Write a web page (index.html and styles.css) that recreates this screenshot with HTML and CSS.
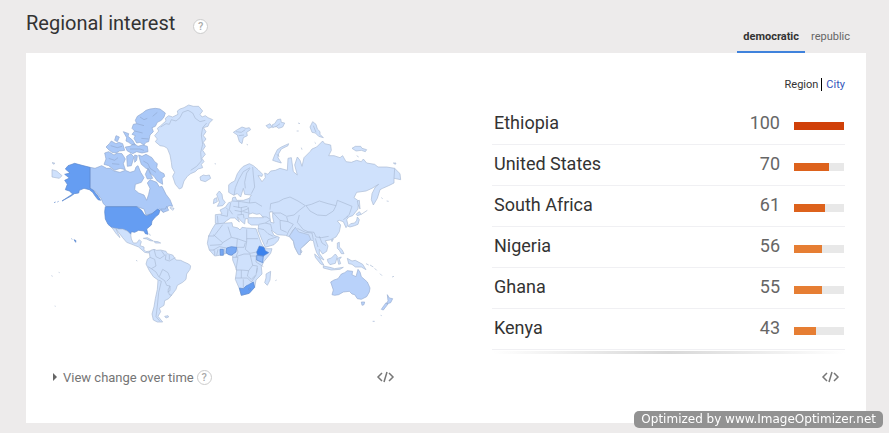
FILE: index.html
```html
<!DOCTYPE html>
<html lang="en">
<head>
<meta charset="utf-8">
<title>Regional interest</title>
<link rel="stylesheet" href="styles.css">
</head>
<body>
<header class="header">
  <h1 class="title">Regional interest</h1>
  <button class="help" type="button" aria-label="Help">?</button>
  <nav class="tabs">
    <button class="tab tab-active" type="button">democratic</button>
    <button class="tab" type="button">republic</button>
  </nav>
</header>
<main class="panel">
  <div class="scope"><span class="scope-current">Region</span><a class="scope-link" href="#city">City</a></div>
  <div class="columns">
    <section class="map-column">
      <svg class="map" viewBox="30 27 1059 672" role="img" aria-label="World map of interest by country">
        <!-- Greenland, Iceland, far eastern Russia -->
        <g class="land">
          <path d="M344 122L356 108 352 100 362 92 378 78 376 70 386 62 398 66 414 58 412 48 420 42 432 38 446 30 460 34 476 34 488 48 480 58 486 66 496 62 504 68 518 74 508 84 504 94 490 98 498 110 490 122 498 132 490 142 496 154 488 166 496 178 486 190 492 200 484 208 488 218 474 222 466 230 452 236 442 244 432 258 426 278 418 282 406 268 398 244 404 232 396 218 394 202 390 180 382 160 372 154 360 152 346 140 352 132Z"/>
          <path class="line" d="M362 96l16-10 10 2 6-14 14 4 12-10 8-16 16-6 14 8 8 16 14 10 16-4M500 84l-12 14-4 22 4 28-6 24 2 26-14 16-18 12"/>
          <path d="M480 246l10-6 8 2 10-2 4 10-16 10-14-4zM36 224l14 4 16 14-8 8-22-4zM36 203l8 1-2 4z"/>
        </g>
        <!-- Canada -->
        <g class="land canada">
          <path d="M150 217L165 220 185 212 200 220 212 220 222 228 240 232 256 226 270 232 284 228 288 216 294 212 302 232 312 248 304 262 286 268 284 284 296 294 312 300 320 316 326 298 330 280 322 264 330 254 350 262 358 276 366 274 378 298 390 314 398 334 386 332 378 344 370 352 358 342 346 350 336 356 318 360 312 342 290 335 200 335 190 326 184 312 168 290 150 280Z"/>
          <path d="M194 174L206 170 222 180 232 174 246 176 256 192 250 206 256 224 240 220 224 226 206 212 192 208 198 192ZM296 180L306 184 318 178 336 188 344 200 352 206 350 218 360 230 372 236 374 244 366 250 368 268 352 258 342 244 332 236 326 222 318 220 304 208 300 196ZM316 238l8-18 8 18 6 12-16 2zM260 184l12-8 10 10-8 26-12 2zM284 180l8 2-2 14-6 6zM198 156l10-10 6-8 14 8 8-4 12 4 6 20-16 2-10 6-12-2-8-6zM228 122l10 4-6 14-8-4zM250 110l16 6-2 8 14 12 8 14-12-2-8-6-8-4 2-10zM256 156L270 154 282 146 294 154 308 150 322 154 324 170 306 174 290 170 278 176 262 168Z"/>
          <path d="M276 100L280 88 290 86 286 76 292 64 308 54 318 46 330 42 346 40 360 42 376 54 372 66 364 76 352 82 346 94 336 98 340 110 330 120 326 140 318 142 312 150 300 142 290 144 282 130 286 122 276 118 284 108Z"/>
          <path class="line" d="M300 66l12 8 10-4M290 86l22 6M284 108l24 6M304 130l22 2M352 52l-14 12M206 190l18 6 10-8M216 206l22 2M310 198l14 8 6 14 18 12M212 152l20 6 14-4M270 162l30 0 12 4M390 338l12 2-4 6z"/>
          <path d="M362 342l14 0 4-8 6 12-16 6z"/>
        </g>
        <!-- United States -->
        <g class="land usa">
          <path d="M76 222L84 212 104 205 126 211 150 217 150 280 160 286 172 300 182 316 174 314 166 304 158 292 148 284 132 280 118 286 116 294 103 296 92 304 66 318 84 306 98 297 88 288 76 284 82 268 74 256 88 249 74 238 90 234Z"/>
          <path d="M196 335L290 335 304 345 314 360 320 362 336 356 352 343 360 346 356 358 346 366 336 378 334 390 320 402 324 418 316 416 312 408 296 406 284 412 274 410 272 418 262 408 248 402 236 402 216 398 204 388 196 372 194 350Z"/>
          <path d="M102 434l6 3-1 5zM94 431l3 2M42 323l5-2M52 321l4-2"/>
        </g>
        <!-- Latin America -->
        <g class="land">
          <path d="M216 398L236 402 248 402 262 408 272 418 274 432 280 444 290 444 298 434 304 440 300 452 312 456 312 464 318 470 330 468 326 474 314 472 296 456 276 448 260 442 248 428 228 402 240 428 230 418Z"/>
          <path d="M310 430l12-2 18 10-10-1-10-5zM342 439l12 1 8 4-16 0zM328 416l3 6M288 496l4 2M34 542l4 2M56 532l3 1M44 633l3 1M374 664l10-2 2 4-8 3z"/>
          <path d="M328 473L332 466 342 463 350 466 362 465 378 469 382 476 398 480 408 495 422 496 432 501 446 507 452 513 450 523 440 537 438 553 428 562 412 571 408 583 396 599 386 611 374 617 372 631 358 640 362 650 354 664 368 681 352 681 340 675 336 657 342 635 346 611 352 583 354 555 340 545 328 527 318 507 322 493 330 487Z"/>
          <path class="line" d="M342 463l6 22 12 6 14-10-10-14M378 478l-2 16 12 4 18-10M388 480v14M330 487l14 6 4 20-14 8-10-6M334 521l14 10 8 14 18 12 6 14 10 2v14l-8 4M358 545l10-22 16 10 6 16-10 10M356 555l8 4-8 34-4 40-4 32 12 14M390 573l-6 12 4 14 8 2"/>
        </g>
        <!-- Eurasia -->
        <g class="land" transform="translate(480 0)">
          <path d="M86 270L92 264 104 258 112 236 122 222 130 214 148 206 160 212 174 224 188 238 186 244 174 242 186 260 196 248 194 234 204 238 212 228 226 226 240 220 262 226 264 190 274 188 280 230 292 240 284 210 292 186 300 196 306 214 312 188 330 170 336 162 350 156 368 138 374 146 392 150 394 166 386 182 402 182 420 188 428 182 438 200 454 202 470 196 484 200 490 192 500 204 524 208 534 216 560 216 584 220 600 236 602 254 582 250 582 264 566 272 548 280 540 284 532 310 520 330 514 314 516 296 526 276 536 268 516 280 498 288 470 292 462 308 476 318 474 342 458 362 446 366 440 374 444 390 438 398 430 380 418 376 412 378 422 390 418 410 408 426 390 435 376 437 384 453 380 469 368 477 358 463 358 475 372 495 360 489 350 473 344 455 340 437 330 435 316 449 302 460 300 476 294 476 284 457 280 439 268 425 256 421 232 419 214 405 222 421 238 427 234 437 222 449 196 457 186 435 174 405 176 390 154 390 144 383 144 371 136 371 134 387 124 379 112 365 118 381 104 369 92 369 80 377 68 387 46 385 46 359 66 357 60 345 76 337 86 323 96 320 98 308 106 306 110 316 130 316 148 310 154 300 134 298 130 280 122 306 112 296 100 300 86 292Z"/>
          <path d="M50 298l8-10 8 10 2 14 8 10-8 10-16 2 6-12zM42 312l8-4 2 12-12 6z"/>
          <path d="M100 112l12-8 14-8 12 4 10-2 4 6-12 8 2 10-12 6-4 18-8-6-6-20zM198 92l12-6 6 10-10 4zM216 90l8-4 8-12 10-2 2 10 10 2-6 12-12 4-8-6-10 4zM218 196l6-16 8-16 12-8 22-10-2 6-20 10-8 14-2 12 10 16-14-4zM330 96l8-16 10 8 4 14 8 8 0 8 10 10-14-4-10-10-10-2zM456 160l10-6 16 0 4 6 14 4-4 6-12-4-16 2zM580 204l8 0-2 4zM140 148l4 2M44 206l4 1M294 84l6 2M290 108l6 0M304 158l2 6M344 142l4 4M470 182l6 4M544 308l4 3M560 318l6 1"/>
          <path class="line" d="M108 110l16 2 12-8M116 122l16-2M226 96l14-10M340 92l8 20M230 178l8 6"/>
          <path d="M472 318l6-2 2 26-6-14zM468 358l10-8 6 8-12 4zM472 366l6 8-4 14-10 4-14 4-6-2 8-8 12-2 6-8zM484 358l18-12M394 434l6-2-4 8zM412 444l6-2 0 14 8 8 6 12-8 0-6-10-6-6zM344 477l16 14 12 20-10-4-16-20zM370 513l20 4 14 4 26-4-10 6-26 2-24-6zM382 493l12-4 12-12 6 8-6 20-16 4-6-8zM412 490l12-4-6 8 4 12-6 2zM442 490l14 8 10-2 22 12 10 16-14-8-18 0-10-8-10-2zM498 506l8 4M510 510l10 6M524 520l6 6M540 536l6 6M576 546l6-2M302 464l4 6-3 4z"/>
          <path class="line" d="M102 302l4-24 10-24 14-24 20-12M136 280l-2-18 6-28 10-14M158 216l2 24 4 36-10 20M150 310l-2 14 18-2 20 12M92 324l-4 20 10 14M62 360l20 4M98 318l26 2 24 4M100 334l22 4 20-4M104 346l20 4 22-10M112 360l18-2 2 12M124 338v20M144 336l4 26 20 2M78 338l6 6-2 20M116 320v18M52 362l2 22M130 350l16 4"/>
          <path class="line" d="M210 344l2-18 24-6 14-8 20-6 24 12 22 14-18 14-16 14-22 4-18-10-22 0-10-4M318 332l16-4 24-10 26 8 24 6-8 16-22 14-26-2-22-12-12-16M408 332l4-16 20 8 24 10-8 24-8 8M298 360l-6 22 18 22 14 6 18 2 6 14 16 2 22-4M260 366l4 14 16 8-14 20-6 14M220 354l20 22 24 4M240 376l2 28 18 8M268 424l10-18 8-8M292 400l24 12 20 2 4 20M196 384l16 4 4 16M176 364l24 2 12 8-16 10-20 4M174 400l18 4 12 12 16 8M200 448l4-14 26-8M346 430l8 26M358 424l8 20 12 8M430 374l14-10M584 220l-2 30"/>
          <path class="water" d="M146 358l12-4 12 4 10-2 10 12-14 0-18 0-12 0zM208 352l10-2 0 16 4 18-10-2-2-14z"/>
        </g>
        <!-- Africa and Oceania -->
        <g class="land" transform="translate(480 315)">
          <path d="M46 72L66 70 96 68 98 80 114 84 120 90 126 82 140 84 168 86 176 108 184 130 194 146 216 146 212 160 192 184 184 200 186 222 168 240 164 262 146 280 124 286 118 266 106 238 110 210 98 180 98 166 80 160 58 166 44 168 28 150 22 130 26 108 36 88ZM198 222l14-8-2 26-8 16-8-8 4-14zM226 242l4-2"/>
          <path class="line" d="M24 108h18l14-18 12-16M40 104l28 24-4 6-34 2M68 128l26-16-10-32M94 112l18 4 28 10V88M140 116h34M140 126l-4 22 14 12 20-4M112 116l-2 26M40 150l18-10 22 4M44 166v-14M50 166l4-18M74 146v16M110 142l4 14-6 14 24-8 18 0M98 172h16l-4 24-2 14h16v24h-18M124 210l22 2 12-16-8-34M150 168h18v18l22 14M146 212l-4 16 12 10 14-14 4-20M124 234h18l12 12M130 238v28M154 246l14-20M158 196l14 2-2 20M28 150h16M110 142l22 0 4-14"/>
        </g>
        <g class="land mid" transform="translate(480 315)">
          <path d="M392 246L402 240 414 236 424 222 434 218 442 212 458 214 456 224 468 230 474 208 480 216 484 230 502 246 510 264 508 276 500 290 484 298 472 296 464 284 456 282 448 274 430 276 416 284 404 286 396 284 400 270ZM484 306l10 0-2 8-6 2zM562 284l6 10 10 2-6 12-12 4 4-10zM558 308l6 4-14 18-6-2zM518 364h6M542 346l3 1"/>
        </g>
        <g class="land india" transform="translate(480 315)">
          <path d="M268 108l6-8 12-18 10 14 30 8 6 14-16 14-14 14 0 18-6 0-12-24-4-18z"/>
        </g>
        <g class="land usa" transform="translate(480 315)">
          <path class="nigeria" d="M80 144l14-4 16 2-2 14-14 10-8-2-8-6z"/>
          <path class="nigeria" d="M60 148h10v18h-9z"/>
          <path d="M118 264l12 2 8-8 8-4 14-8 4 16-16 18-24 6z"/>
          <path class="kenya" d="M170 166l20 2-2 20-18-8z"/>
          <path class="ethiopia" d="M170 156l8-18 14 4 4 10 10 6-16 10-18-4z"/>
          <path class="kenya" d="M146 266l4-2 2 4-4 2z"/>
        </g>
      </svg>
      <div class="footer">
        <button class="change" type="button"><span class="arrow"></span>View change over time</button>
        <button class="help help-flat" type="button" aria-label="Help">?</button>
        <button class="embed embed-map" type="button" aria-label="Embed map">
          <svg class="code" viewBox="0 0 19 12"><path d="M6 2L2 6 6 10M13 2L17 6 13 10M11 1L8 11"/></svg>
        </button>
      </div>
    </section>
    <section class="list-column">
      <table class="regions">
        <tbody>
          <tr><th scope="row">Ethiopia</th><td class="value">100</td><td class="meter"><div class="track"><div class="fill fill-high" style="width:100%"></div></div></td></tr>
          <tr><th scope="row">United States</th><td class="value">70</td><td class="meter"><div class="track"><div class="fill fill-mid" style="width:70%"></div></div></td></tr>
          <tr><th scope="row">South Africa</th><td class="value">61</td><td class="meter"><div class="track"><div class="fill fill-mid" style="width:61%"></div></div></td></tr>
          <tr><th scope="row">Nigeria</th><td class="value">56</td><td class="meter"><div class="track"><div class="fill" style="width:56%"></div></div></td></tr>
          <tr><th scope="row">Ghana</th><td class="value">55</td><td class="meter"><div class="track"><div class="fill" style="width:55%"></div></div></td></tr>
          <tr><th scope="row">Kenya</th><td class="value">43</td><td class="meter"><div class="track"><div class="fill" style="width:43%"></div></div></td></tr>
        </tbody>
      </table>
      <div class="fade"></div>
      <div class="footer">
        <button class="embed" type="button" aria-label="Embed list">
          <svg class="code" viewBox="0 0 19 12"><path d="M6 2L2 6 6 10M13 2L17 6 13 10M11 1L8 11"/></svg>
        </button>
      </div>
    </section>
  </div>
</main>
<div class="badge">Optimized by www.ImageOptimizer.net</div>
</body>
</html>
```
FILE: styles.css
```css
* { box-sizing: border-box; }
body {
  margin: 0;
  padding: 0 23px 10px 26px;
  background: #edebeb;
  color: #333;
  font-family: Roboto, "Liberation Sans", sans-serif;
}
button {
  margin: 0;
  padding: 0;
  border: 0;
  background: none;
  color: inherit;
  font: inherit;
}
.header {
  display: flex;
  align-items: center;
  height: 53px;
}
.title {
  margin: 0;
  padding-bottom: 8px;
  font-size: 20px;
  line-height: 24px;
  font-weight: 400;
}
.help {
  width: 15px;
  height: 15px;
  margin-left: 18px;
  border: 1px solid #ccc;
  border-radius: 50%;
  background: #fff;
  color: #aaa;
  font-size: 11px;
  line-height: 13px;
  font-weight: 500;
}
.tabs {
  display: flex;
  align-self: flex-end;
  margin-left: auto;
  padding-right: 10px;
}
.tab {
  height: 34px;
  padding: 2px 6px 0;
  border-bottom: 2px solid transparent;
  color: #666;
  font-size: 11px;
}
.tab-active {
  border-color: #3f82dc;
  color: #333;
  font-weight: 700;
}
.panel {
  padding: 25px 21px 36px 24px;
  background: #fff;
}
.scope {
  display: flex;
  justify-content: flex-end;
  font-size: 11px;
  line-height: 13px;
}
.scope-current {
  padding-right: 3px;
  border-right: 1px solid #000;
}
.scope-link {
  padding-left: 4px;
  color: #3355bb;
  text-decoration: none;
}
.columns {
  display: grid;
  grid-template-columns: 1fr 1fr;
  gap: 89px;
  padding-top: 13px;
}
.map-column, .list-column {
  display: flex;
  flex-direction: column;
}
.map {
  display: block;
  width: 100%;
}
.land {
  fill: #cfe1fc;
  stroke: #a9b9d3;
  stroke-width: 2;
  stroke-linejoin: round;
}
.canada { fill: #abc9f8; stroke: #91a9d0; }
.usa { fill: #659df2; stroke: #5a87cc; }
.mid { fill: #b9d2fa; stroke: #98aed2; }
.india { fill: #bfd6fb; }
.line { fill: none; }
.water { fill: #fff; }
.nigeria { fill: #78a9f4; }
.kenya { fill: #94bbf7; }
.ethiopia { fill: #3b82ed; }
.footer {
  display: flex;
  align-items: center;
  height: 20px;
  margin-top: auto;
}
.change {
  display: flex;
  align-items: center;
  padding-left: 3px;
  color: #757575;
  font-size: 13px;
}
.arrow {
  margin-right: 6px;
  border: 4px solid transparent;
  border-left: 4px solid #666;
  border-right: 0;
}
.help-flat { margin-left: 3px; }
.embed {
  display: flex;
  margin-left: auto;
  margin-right: 5px;
}
.embed-map { margin-right: 8px; }
.code {
  width: 19px;
  height: 12px;
  fill: none;
  stroke: #777;
  stroke-width: 1.5;
}
.regions {
  width: 100%;
  border-spacing: 0;
  font-size: 18px;
  line-height: 20px;
}
.regions th, .regions td {
  height: 41px;
  padding: 0 0 2px;
  border-bottom: 1px solid #f0f0f3;
}
.regions th {
  padding-left: 2px;
  text-align: left;
  font-weight: 400;
}
.regions .value {
  color: #666;
  text-align: right;
}
.regions .meter {
  width: 65px;
  padding: 4px 1px 0 14px;
}
.track { background: #e8e8e8; }
.fill {
  height: 8px;
  background: #e67e33;
}
.fill-high { background: #d04008; }
.fill-mid { background: #dd621c; }
.fade {
  height: 3px;
  margin: 1px 0 13px;
  background: linear-gradient(90deg, transparent, #d8d8d8 50%, transparent);
}
.badge {
  position: fixed;
  right: 6px;
  bottom: 5px;
  padding: 0 7px;
  border-radius: 5px;
  background: #929292;
  color: #fff;
  font-family: "DejaVu Sans", sans-serif;
  font-size: 12px;
  line-height: 17px;
}
```
